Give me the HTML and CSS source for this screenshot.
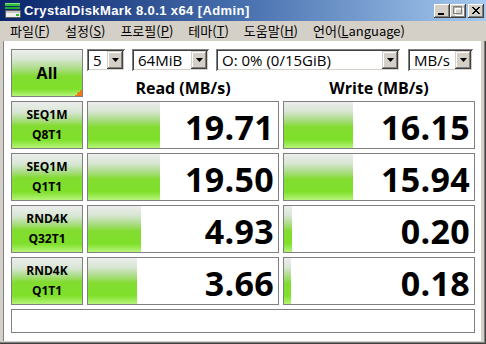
FILE: index.html
```html
<!DOCTYPE html>
<html lang="ko">
<head>
<meta charset="utf-8">
<title>CrystalDiskMark 8.0.1 x64 [Admin]</title>
<link rel="stylesheet" href="styles.css">
</head>
<body>
<div class="window">
  <div class="titlebar">
    <svg class="app-icon" width="16" height="16" viewBox="0 0 16 16">
      <rect x="0" y="0" width="15" height="3" fill="#2fbf3a"/>
      <rect x="0" y="0" width="15" height="1" fill="#7fe07f"/>
      <rect x="0" y="4" width="15" height="2" fill="#22a830"/>
      <rect x="0.5" y="7.5" width="15" height="7" fill="#f0f0f0" stroke="#606060" stroke-width="1"/>
      <rect x="1" y="8" width="14" height="2" fill="#c8c8c8"/>
      <rect x="11" y="11" width="3" height="2" fill="#30c030"/>
    </svg>
    <span class="title">CrystalDiskMark 8.0.1 x64 [Admin]</span>
    <div class="caption-buttons">
      <span class="cap-btn"><svg width="16" height="14" viewBox="0 0 16 14"><rect x="4" y="9" width="6" height="2" fill="#000"/></svg></span>
      <span class="cap-btn"><svg width="16" height="14" viewBox="0 0 16 14"><path d="M4.5 3.5h8v7h-8z M4 4h9" fill="none" stroke="#fff" stroke-width="1" transform="translate(1 1)"/><path d="M3.5 2.5h8v7h-8z M3 3h9" fill="none" stroke="#808080" stroke-width="1"/></svg></span>
      <span class="cap-btn close"><svg width="16" height="14" viewBox="0 0 16 14"><path d="M4 3l7 7M5 3l7 7M11 3l-7 7M12 3l-7 7" stroke="#000" stroke-width="1" fill="none"/></svg></span>
    </div>
  </div>
  <div class="menubar">
    <span class="menu">파일(<u>F</u>)</span>
    <span class="menu">설정(<u>S</u>)</span>
    <span class="menu">프로필(<u>P</u>)</span>
    <span class="menu">테마(<u>T</u>)</span>
    <span class="menu">도움말(<u>H</u>)</span>
    <span class="menu">언어(<u>L</u>anguage)</span>
  </div>
  <div class="body-area">
    <div class="client">
      <div class="grid">
        <div class="all-btn">All</div>
        <div class="controls">
          <div class="combo c-count"><span class="combo-text">5</span><span class="drop"><svg width="7" height="4" viewBox="0 0 7 4"><path d="M0 0h7L3.5 4z" fill="#000"/></svg></span></div>
          <div class="combo c-size"><span class="combo-text">64MiB</span><span class="drop"><svg width="7" height="4" viewBox="0 0 7 4"><path d="M0 0h7L3.5 4z" fill="#000"/></svg></span></div>
          <div class="combo c-drive"><span class="combo-text">O: 0% (0/15GiB)</span><span class="drop"><svg width="7" height="4" viewBox="0 0 7 4"><path d="M0 0h7L3.5 4z" fill="#000"/></svg></span></div>
          <div class="combo c-unit"><span class="combo-text">MB/s</span><span class="drop"><svg width="7" height="4" viewBox="0 0 7 4"><path d="M0 0h7L3.5 4z" fill="#000"/></svg></span></div>
        </div>
        <div class="hdr">Read (MB/s)</div>
        <div class="hdr">Write (MB/s)</div>

        <div class="label">SEQ1M<br>Q8T1</div>
        <div class="cell"><div class="bar" style="width:72px"></div><span class="val">19.71</span></div>
        <div class="cell"><div class="bar" style="width:69px"></div><span class="val">16.15</span></div>

        <div class="label">SEQ1M<br>Q1T1</div>
        <div class="cell"><div class="bar" style="width:72px"></div><span class="val">19.50</span></div>
        <div class="cell"><div class="bar" style="width:69px"></div><span class="val">15.94</span></div>

        <div class="label">RND4K<br>Q32T1</div>
        <div class="cell"><div class="bar" style="width:53px"></div><span class="val">4.93</span></div>
        <div class="cell"><div class="bar" style="width:8px"></div><span class="val">0.20</span></div>

        <div class="label">RND4K<br>Q1T1</div>
        <div class="cell"><div class="bar" style="width:49px"></div><span class="val">3.66</span></div>
        <div class="cell"><div class="bar" style="width:7px"></div><span class="val">0.18</span></div>

        <div class="status"></div>
      </div>
    </div>
  </div>
</div>
</body>
</html>
```
FILE: styles.css
```css
* { box-sizing: border-box; }
html, body { margin: 0; padding: 0; }
body { background: #d4d0c8; width: 486px; height: 344px; overflow: hidden; }

.window {
  width: 486px;
  height: 344px;
  display: flex;
  flex-direction: column;
  background: #d4d0c8;
}

.titlebar {
  height: 21px;
  flex: none;
  display: flex;
  align-items: center;
  background: linear-gradient(to right, #0a246a 0%, #4870ae 50%, #a6caf0 100%);
  padding-left: 5px;
}
.app-icon { flex: none; }
.title {
  margin-left: 3px;
  color: #fff;
  font-family: "Liberation Sans", Arial, sans-serif;
  font-weight: bold;
  font-size: 13px;
  letter-spacing: 0.4px;
  white-space: nowrap;
}
.caption-buttons {
  margin-left: auto;
  margin-right: 2px;
  display: flex;
  align-items: center;
}
.cap-btn {
  width: 16px;
  height: 14px;
  background: #d4d0c8;
  box-shadow: inset -1px -1px #404040, inset 1px 1px #fff, inset -2px -2px #808080, inset 2px 2px #d4d0c8;
  display: block;
}
.cap-btn svg { display: block; }
.cap-btn.close { margin-left: 2px; }

.menubar {
  height: 20px;
  flex: none;
  display: flex;
  align-items: center;
  gap: 1px;
  padding-left: 3px;
  font-family: "Noto Sans CJK KR", "Noto Sans", sans-serif;
  font-size: 13px;
  color: #000;
}
.menu { padding: 0 7px; line-height: 18px; }
.menu u { text-underline-offset: 1px; }

.body-area {
  flex: 1;
  display: flex;
  padding: 0 4px 2px 3px;
  border-right: 1px solid #404040;
  border-bottom: 1px solid #404040;
  box-shadow: inset -1px -1px #808080;
}
.client {
  flex: 1;
  background: #fff;
  border-left: 1px solid #808080;
  padding: 8px 0 0 7px;
}

.grid {
  display: grid;
  grid-template-columns: 72px 192px 192px;
  grid-template-rows: 22px 22px repeat(4, 48px) 24px;
  column-gap: 4px;
  row-gap: 4px;
  font-family: "Open Sans", "DejaVu Sans", sans-serif;
}

.all-btn {
  grid-row: 1 / 3;
  border: 1px solid #808080;
  background:
    linear-gradient(to top left, #f07818 50%, transparent 50%) right bottom / 7px 7px no-repeat,
    linear-gradient(#eceeec 0%, #d8e6d4 20%, #a8dc80 42%, #82dc30 58%, #7fe02a 85%, #b6f47a 100%);
  display: flex;
  align-items: center;
  justify-content: center;
  font-weight: 700;
  font-size: 16px;
  color: #000;
}

.controls {
  grid-column: 2 / 4;
  display: flex;
  gap: 7px;
}
.combo {
  height: 22px;
  display: flex;
  align-items: center;
  background: #fff;
  box-shadow: inset 1px 1px #808080, inset -1px -1px #fff, inset 2px 2px #404040, inset -2px -2px #d4d0c8;
  padding: 2px;
  font-size: 15px;
  color: #000;
}
.c-count { width: 38px; }
.c-size { width: 77px; }
.c-drive { width: 184px; }
.c-unit { width: 65px; margin-left: 1px; }
.combo-text { flex: 1; padding-left: 4px; white-space: nowrap; overflow: hidden; line-height: 18px; }
.drop {
  flex: none;
  width: 16px;
  height: 18px;
  background: #d4d0c8;
  box-shadow: inset -1px -1px #404040, inset 1px 1px #d4d0c8, inset -2px -2px #808080, inset 2px 2px #fff;
  display: flex;
  align-items: center;
  justify-content: center;
}
.drop svg { display: block; }

.hdr {
  text-align: center;
  font-weight: 700;
  font-size: 16px;
  line-height: 22px;
  padding-top: 2px;
  color: #000;
}

.label {
  border: 1px solid #808080;
  background: linear-gradient(#eceeec 0%, #d8e6d4 22%, #a8dc80 40%, #82dc30 52%, #7fe02a 82%, #b6f47a 100%);
  display: flex;
  align-items: center;
  justify-content: center;
  text-align: center;
  font-weight: 700;
  font-size: 12px;
  line-height: 20px;
  color: #000;
  padding-bottom: 1px;
}

.cell {
  border: 1px solid #808080;
  background: #fff;
  display: flex;
  align-items: center;
}
.bar {
  align-self: stretch;
  flex: none;
  background: linear-gradient(#eceeec 0%, #d8e6d4 20%, #a8dc80 40%, #82dc30 55%, #7fe02a 82%, #b6f47a 100%);
}
.val {
  margin-left: auto;
  padding-right: 4px;
  font-weight: 700;
  font-size: 34px;
  line-height: 46px;
  padding-top: 3px;
  color: #000;
  letter-spacing: 0.3px;
}

.status {
  grid-column: 1 / 4;
  border: 1px solid #808080;
  background: #fff;
}
```
